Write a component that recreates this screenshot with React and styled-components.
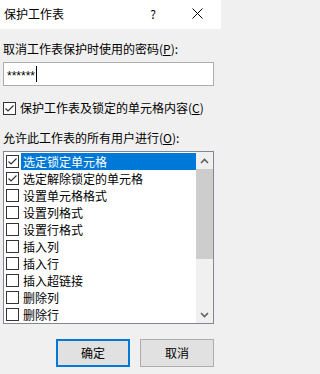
import React, { useState } from 'react';
import styled, { createGlobalStyle } from 'styled-components';

const GlobalStyle = createGlobalStyle`
  html, body {
    margin: 0;
    padding: 0;
    background: #f0f0f0;
  }
  body {
    font-family: "Noto Sans CJK SC", "Noto Sans", sans-serif;
    font-size: 12px;
    color: #000;
  }
`;

const permissions = [
  '选定锁定单元格',
  '选定解除锁定的单元格',
  '设置单元格格式',
  '设置列格式',
  '设置行格式',
  '插入列',
  '插入行',
  '插入超链接',
  '删除列',
  '删除行',
];

const Dialog = styled.div`
  width: 221px;
  height: 374px;
  display: flex;
  flex-direction: column;
  background: #f0f0f0;
  overflow: hidden;
`;

const TitleBar = styled.div`
  height: 29px;
  display: flex;
  align-items: center;
  background: #fff;
  padding: 0 0 2px 4px;
  box-sizing: border-box;

  .title {
    flex: 1;
    line-height: 16px;
  }
  .help {
    width: 12px;
    text-align: center;
    margin-right: 33px;
    line-height: 16px;
  }
  .close {
    display: flex;
    margin-right: 18px;
  }
`;

const Body = styled.div`
  display: flex;
  flex-direction: column;
  padding: 0 7px 0 3px;
`;

const Label = styled.div`
  line-height: 16px;
  height: 16px;
  margin-top: ${p => p.top}px;
  white-space: nowrap;

  u {
    text-decoration: underline;
    text-underline-offset: 1px;
  }
`;

const PasswordInput = styled.div`
  margin-top: 5px;
  height: 24px;
  box-sizing: border-box;
  border: 1px solid #adadad;
  background: #fff;
  display: flex;
  align-items: center;
  padding-left: 3px;
  font-family: "Liberation Sans", sans-serif;
  font-size: 12px;

  .stars {
    margin-top: 4px;
  }
  .caret {
    width: 1px;
    height: 16px;
    background: #000;
    margin-left: 1px;
  }
`;

const Box = styled.span`
  width: 13px;
  height: 13px;
  flex: none;
  box-sizing: border-box;
  border: 1px solid #333;
  background: #fff;
  display: flex;
  align-items: center;
  justify-content: center;
`;

const CheckRow = styled.label`
  margin-top: 14px;
  display: flex;
  align-items: center;
  gap: 4px;
  height: 16px;
  line-height: 16px;
  white-space: nowrap;

  u {
    text-underline-offset: 1px;
  }
`;

const List = styled.div`
  margin-top: 5px;
  height: 173px;
  box-sizing: border-box;
  border: 1px solid #828790;
  background: #fff;
  display: flex;
`;

const Items = styled.div`
  flex: 1;
  overflow: hidden;
  padding-top: 1px;
`;

const Item = styled.div`
  height: 17px;
  display: flex;
  align-items: center;
  padding-left: 2px;

  .text {
    flex: 1;
    height: 17px;
    line-height: 17px;
    margin-left: 2px;
    padding-left: 2px;
    white-space: nowrap;
    background: ${p => (p.selected ? '#0078d7' : 'transparent')};
    color: ${p => (p.selected ? '#fff' : '#000')};
  }
`;

const ScrollBar = styled.div`
  width: 17px;
  flex: none;
  background: #f0f0f0;
  display: flex;
  flex-direction: column;
`;

const ScrollButton = styled.div`
  height: 17px;
  display: flex;
  align-items: center;
  justify-content: center;
`;

const Track = styled.div`
  flex: 1;
  display: flex;
  flex-direction: column;
`;

const Thumb = styled.div`
  height: 90px;
  background: #cdcdcd;
`;

const Buttons = styled.div`
  margin-top: 15px;
  display: flex;
  justify-content: flex-end;
  gap: 10px;
`;

const Button = styled.button`
  width: 74px;
  height: 28px;
  box-sizing: border-box;
  background: #e1e1e1;
  border: ${p => (p.primary ? '2px solid #0078d7' : '1px solid #adadad')};
  font-family: inherit;
  font-size: 12px;
  color: #000;
  padding: 0;
  line-height: 16px;
`;

const Check = () => (
  <svg width="11" height="11" viewBox="0 0 11 11">
    <path d="M1.5 5.5 L4 8 L9.5 2.5" fill="none" stroke="#333" strokeWidth="1.2" />
  </svg>
);

const Chevron = ({ down }) => (
  <svg width="9" height="6" viewBox="0 0 9 6">
    <path
      d={down ? 'M1 1 L4.5 4.5 L8 1' : 'M1 5 L4.5 1.5 L8 5'}
      fill="none"
      stroke="#606060"
      strokeWidth="1.6"
    />
  </svg>
);

const App = () => {
  const [checked, setChecked] = useState([true, true, false, false, false, false, false, false, false, false]);
  const [protect, setProtect] = useState(true);

  const toggle = i => {
    setChecked(c => c.map((v, j) => (j === i ? !v : v)));
  };

  return (
    <Dialog>
      <GlobalStyle />
      <TitleBar>
        <span className="title">保护工作表</span>
        <span className="help">?</span>
        <span className="close">
          <svg width="11" height="11" viewBox="0 0 11 11">
            <path d="M0.5 0.5 L10.5 10.5 M10.5 0.5 L0.5 10.5" stroke="#000" strokeWidth="1" />
          </svg>
        </span>
      </TitleBar>
      <Body>
        <Label top={12}>
          取消工作表保护时使用的密码(<u>P</u>):
        </Label>
        <PasswordInput>
          <span className="stars">******</span>
          <span className="caret" />
        </PasswordInput>
        <CheckRow onClick={() => setProtect(!protect)}>
          <Box>{protect && <Check />}</Box>
          <span>
            保护工作表及锁定的单元格内容(<u>C</u>)
          </span>
        </CheckRow>
        <Label top={14}>
          允许此工作表的所有用户进行(<u>O</u>):
        </Label>
        <List>
          <Items>
            {permissions.map((p, i) => (
              <Item key={p} selected={i === 0} onClick={() => toggle(i)}>
                <Box>{checked[i] && <Check />}</Box>
                <span className="text">{p}</span>
              </Item>
            ))}
          </Items>
          <ScrollBar>
            <ScrollButton>
              <Chevron />
            </ScrollButton>
            <Track>
              <Thumb />
            </Track>
            <ScrollButton>
              <Chevron down />
            </ScrollButton>
          </ScrollBar>
        </List>
        <Buttons>
          <Button primary>确定</Button>
          <Button>取消</Button>
        </Buttons>
      </Body>
    </Dialog>
  );
};

export default App;
